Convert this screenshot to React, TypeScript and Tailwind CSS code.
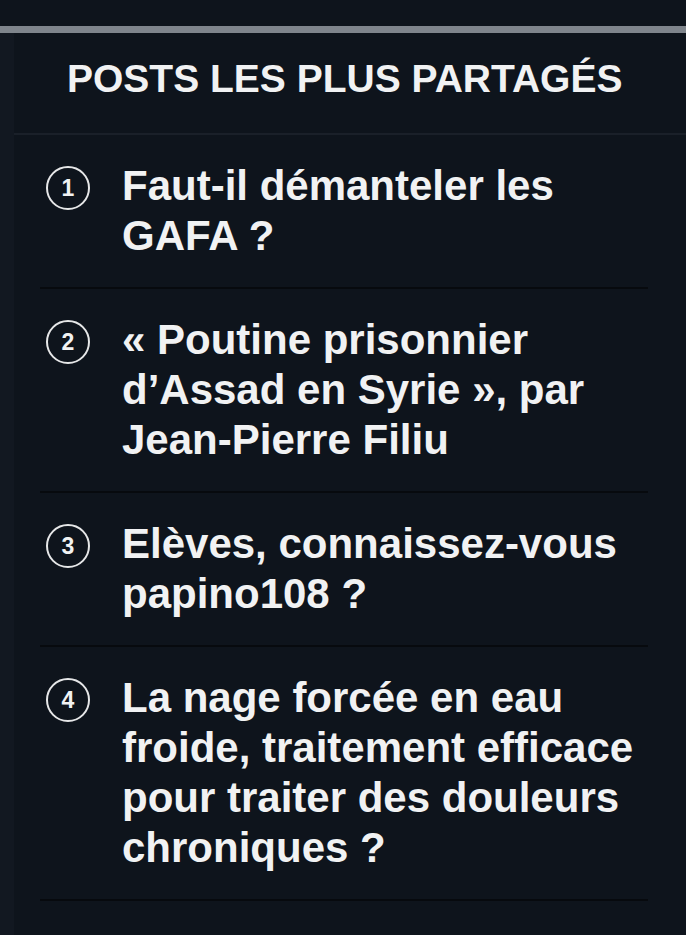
const posts = [
  'Faut-il démanteler les GAFA ?',
  '« Poutine prisonnier d’Assad en Syrie », par Jean-Pierre Filiu',
  'Elèves, connaissez-vous papino108 ?',
  'La nage forcée en eau froide, traitement efficace pour traiter des douleurs chroniques ?',
];

export default function App() {
  return (
    <div className="min-h-[935px] w-full bg-[#0e141c] font-['Liberation_Sans',Arial,sans-serif] text-[#f1f2f3]">
      <div className="h-[26px]" />
      <div className="h-[7px] bg-[#7f858c]" />
      <div className="flex min-h-[902px]">
        <div className="w-[14px] shrink-0 bg-[#121821]" />
        <div className="flex-1">
          <div className="border-b-2 border-[#1a2029] pt-[24px] pb-[32px]">
            <h2 className="pl-[53px] text-[39px] leading-[44px] font-bold uppercase whitespace-nowrap">
              Posts les plus partagés
            </h2>
          </div>
          <ul className="ml-[26px] w-[608px]">
            {posts.map((title, i) => (
              <li key={i} className="flex items-start border-b-2 border-[#070a0e] py-[26px]">
                <span className="ml-[6px] mt-[5px] flex h-[44px] w-[44px] shrink-0 items-center justify-center rounded-full border-2 border-[#e6e7e8] text-[23px] font-bold leading-none">
                  {i + 1}
                </span>
                <a href="#" className="ml-[32px] w-[526px] text-[42px] leading-[50px] font-bold">
                  {title}
                </a>
              </li>
            ))}
          </ul>
        </div>
      </div>
    </div>
  );
}
